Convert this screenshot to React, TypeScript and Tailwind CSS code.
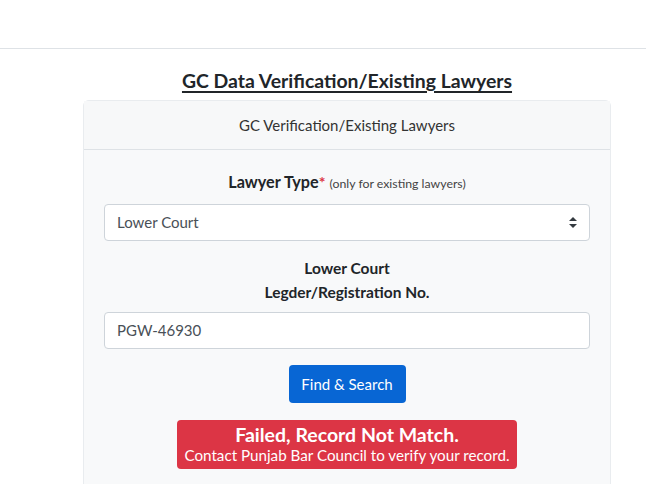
import React from "react";

export default function App() {
  return (
    <div className="min-h-[484px] bg-white text-[#212529]" style={{ fontFamily: "Lato, 'Liberation Sans', sans-serif" }}>
      <div className="h-[49px] border-b border-[#dee2e6]" />
      <div className="pl-[83px] pr-[35px] pt-[20px]">
        <h1 className="text-center text-[19.4px] leading-[24px] font-bold underline underline-offset-[3px] decoration-[1.5px]">
          GC Data Verification/Existing Lawyers
        </h1>
        <div className="mt-[7px] rounded-[6px] border border-[#e9ecef] bg-[#f8f9fa] pb-[30px]">
          <div className="h-[49px] flex items-center justify-center border-b border-[#dee2e6] bg-[#f7f8f9] text-[15px] text-[#333]">
            GC Verification/Existing Lawyers
          </div>
          <div className="px-[20px] pt-[20px]">
            <div className="text-center leading-[24px]">
              <span className="font-bold text-[16.2px]">Lawyer Type</span>
              <span className="text-[#dc3545] font-bold">*</span>{" "}
              <span className="text-[12.3px] text-[#444]">(only for existing lawyers)</span>
            </div>
            <div className="mt-[8px] h-[37px] rounded-[4px] border border-[#ced4da] bg-white flex items-center pl-[12px] pr-[12px] justify-between">
              <span className="text-[15px] text-[#495057]">Lower Court</span>
              <svg width="8" height="11" viewBox="0 0 8 11">
                <path d="M4 0 L8 4 H0 Z" fill="#343a40" />
                <path d="M4 11 L8 7 H0 Z" fill="#343a40" />
              </svg>
            </div>
            <div className="mt-[15px] text-center font-bold text-[15.5px] leading-[24px]">
              <div>Lower Court</div>
              <div>Legder/Registration No.</div>
            </div>
            <div className="mt-[8px] h-[37px] rounded-[4px] border border-[#ced4da] bg-white flex items-center pl-[12px]">
              <span className="text-[15px] text-[#495057]">PGW-46930</span>
            </div>
            <div className="mt-[16px] flex justify-center">
              <button className="h-[38px] w-[117px] rounded-[4px] bg-[#0866d4] text-white text-[15px]">
                Find &amp; Search
              </button>
            </div>
            <div className="mt-[17px] flex justify-center">
              <div className="w-[340px] h-[49px] rounded-[4px] bg-[#dc3545] text-white text-center flex flex-col justify-center">
                <div className="font-bold text-[19.5px] leading-[21px]">Failed, Record Not Match.</div>
                <div className="text-[15.2px] leading-[20px]">Contact Punjab Bar Council to verify your record.</div>
              </div>
            </div>
          </div>
        </div>
      </div>
    </div>
  );
}
